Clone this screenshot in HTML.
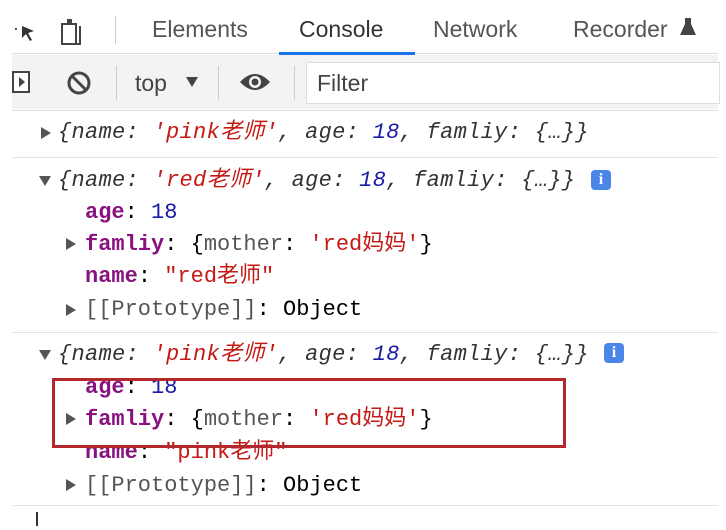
<!DOCTYPE html>
<html><head><meta charset="utf-8"><style>
body{margin:0;width:726px;height:530px;background:#fff;overflow:hidden;position:relative;font-family:"Liberation Sans","Noto Sans CJK SC",sans-serif}
.a{position:absolute;white-space:nowrap}
.m{font-family:"Liberation Mono","Noto Sans CJK SC",monospace;font-size:22px;line-height:26px}
.i{font-style:italic;color:#333;letter-spacing:0.3px}
.s{color:#c41a16}
.n{color:#1a1aa6}
.k{color:#881280;font-weight:bold}
.g{color:#555}
.tri{position:absolute;width:0;height:0;border-top:6px solid transparent;border-bottom:6px solid transparent;border-left:10px solid #555}
.dn{position:absolute;width:0;height:0;border-left:6px solid transparent;border-right:6px solid transparent;border-top:10px solid #555}
.hr{position:absolute;left:12px;width:706px;height:1px;background:#e4e4e4}
.tab{font-size:23px;color:#555;top:16px}
.info{position:absolute;width:20px;height:20px;background:#4a86e8;border-radius:4px;color:#fff;font:bold 16px "Liberation Serif",serif;text-align:center;line-height:20px}
</style></head><body>
<div class="a" style="left:0;top:0;width:726px;height:54px;background:#fff"></div>
<svg class="a" style="left:14px;top:18px" width="24" height="26"><path d="M8 8 L20 13 L14 15 L18 22 L16 23 L12 16 L8 20 Z" fill="#333"/><rect x="1" y="10" width="2" height="2" fill="#555"/></svg>
<svg class="a" style="left:60px;top:16px" width="30" height="30"><rect x="2" y="8" width="14" height="20" fill="none" stroke="#444" stroke-width="2"/><rect x="7" y="3" width="5" height="5" fill="#444"/><path d="M20 10 V28 H14" fill="none" stroke="#444" stroke-width="2"/></svg>
<div class="a" style="left:115px;top:16px;width:1px;height:28px;background:#ccc"></div>
<div class="a tab" style="left:152px">Elements</div>
<div class="a tab" style="left:299px;color:#333">Console</div>
<div class="a tab" style="left:433px">Network</div>
<div class="a tab" style="left:573px">Recorder</div>
<svg class="a" style="left:679px;top:17px" width="18" height="20"><path d="M6 1 H12 V7 L17 18 H1 L6 7 Z" fill="#444"/></svg>
<div class="a" style="left:12px;top:53px;width:706px;height:1px;background:#ddd"></div>
<div class="a" style="left:279px;top:52px;width:136px;height:3px;background:#1a73e8"></div>
<div class="a" style="left:12px;top:55px;width:706px;height:54px;background:#f3f3f3"></div>
<svg class="a" style="left:12px;top:70px" width="20" height="24"><rect x="1" y="2" width="16" height="20" fill="#fff" stroke="#444" stroke-width="2"/><path d="M7 7 L13 12 L7 17 Z" fill="#444"/></svg>
<svg class="a" style="left:66px;top:70px" width="26" height="26"><circle cx="13" cy="13" r="10" fill="none" stroke="#444" stroke-width="3"/><path d="M6 6 L20 20" stroke="#444" stroke-width="3"/></svg>
<div class="a" style="left:116px;top:66px;width:1px;height:34px;background:#ccc"></div>
<div class="a" style="left:135px;top:70px;font-size:23px;color:#444">top</div>
<div class="dn" style="left:186px;top:77px;border-top-color:#444"></div>
<div class="a" style="left:218px;top:66px;width:1px;height:34px;background:#ccc"></div>
<svg class="a" style="left:238px;top:70px" width="34" height="24"><path d="M2 12 Q17 -4 32 12 Q17 28 2 12 Z" fill="#444"/><circle cx="17" cy="12" r="6" fill="#f3f3f3"/><circle cx="17" cy="12" r="3.5" fill="#444"/></svg>
<div class="a" style="left:294px;top:66px;width:1px;height:34px;background:#ccc"></div>
<div class="a" style="left:306px;top:62px;width:412px;height:40px;background:#fff;border:1px solid #ddd"></div>
<div class="a" style="left:317px;top:70px;font-size:23px;color:#444">Filter</div>
<div class="hr" style="top:110px;background:#ddd"></div>
<div class="tri" style="left:41px;top:127px"></div>
<div class="a m i" style="left:58px;top:120px">{name: <span class="s">'pink老师'</span>, age: <span class="n">18</span>, famliy: {…}}</div>
<div class="hr" style="top:157px"></div>
<div class="dn" style="left:39px;top:176px"></div>
<div class="a m i" style="left:58px;top:168px">{name: <span class="s">'red老师'</span>, age: <span class="n">18</span>, famliy: {…}}</div>
<div class="info" style="left:591px;top:170px">i</div>
<div class="a m" style="left:85px;top:200px"><span class="k">age</span>: <span class="n">18</span></div>
<div class="tri" style="left:66px;top:238px"></div>
<div class="a m" style="left:85px;top:232px"><span class="k">famliy</span>: {<span class="g">mother</span>: <span class="s">'red妈妈'</span>}</div>
<div class="a m" style="left:85px;top:264px"><span class="k">name</span>: <span class="s">"red老师"</span></div>
<div class="tri" style="left:66px;top:304px"></div>
<div class="a m" style="left:85px;top:297px"><span class="g">[[Prototype]]</span>: Object</div>
<div class="hr" style="top:332px"></div>
<div class="dn" style="left:39px;top:350px"></div>
<div class="a m i" style="left:58px;top:342px">{name: <span class="s">'pink老师'</span>, age: <span class="n">18</span>, famliy: {…}}</div>
<div class="info" style="left:604px;top:343px">i</div>
<div class="a m" style="left:85px;top:375px"><span class="k">age</span>: <span class="n">18</span></div>
<div class="tri" style="left:66px;top:413px"></div>
<div class="a m" style="left:85px;top:407px"><span class="k">famliy</span>: {<span class="g">mother</span>: <span class="s">'red妈妈'</span>}</div>
<div class="a m" style="left:85px;top:440px"><span class="k">name</span>: <span class="s">"pink老师"</span></div>
<div class="tri" style="left:66px;top:479px"></div>
<div class="a m" style="left:85px;top:473px"><span class="g">[[Prototype]]</span>: Object</div>
<div class="a" style="left:52px;top:378px;width:508px;height:64px;border:3px solid #b3282d"></div>
<div class="hr" style="top:505px"></div>
<div class="a" style="left:36px;top:512px;width:2px;height:14px;background:#333"></div>
</body></html>
